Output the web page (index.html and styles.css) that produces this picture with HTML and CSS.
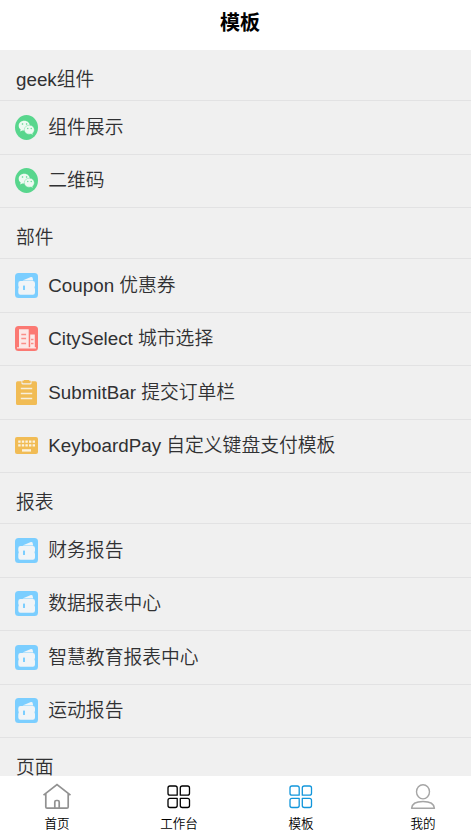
FILE: index.html
```
<!DOCTYPE html>
<html lang="zh-CN">
<head>
<meta charset="utf-8">
<meta name="viewport" content="width=device-width, initial-scale=1">
<title>模板</title>
<link rel="stylesheet" href="styles.css">
</head>
<body>
<svg class="defs" aria-hidden="true">
  <symbol id="chat" viewBox="0 0 23 25">
    <ellipse cx="11.5" cy="12.5" rx="11.5" ry="12.5" fill="#58d68d"/>
    <path d="M9.300 5.700c-3.300 0-5.600 2.200-5.600 5 0 1.600.7 2.900 2 3.800l-.6 2 2.200-1.100c4 .9 7.500-1.400 7.500-4.700 0-2.800-2.300-5-5.500-5z" fill="#eefaf2"/>
    <path d="M14.400 10.200c-3 0-5.100 2-5.100 4.500s2.100 4.500 5.100 4.500l1.700-.2 2 1-.5-1.900c1.100-.8 1.700-2 1.700-3.400 0-2.500-2-4.500-4.900-4.500z" fill="#eefaf2" stroke="#58d68d" stroke-width=".4"/>
    <g fill="#58d68d"><circle cx="7.500" cy="9" r=".8"/><circle cx="11.600" cy="9" r=".8"/><circle cx="12.800" cy="13.500" r=".65"/><circle cx="16.200" cy="13.500" r=".65"/></g>
  </symbol>
  <symbol id="wallet" viewBox="0 0 23 25">
    <rect width="23" height="25" rx="3.500" fill="#7bceff"/>
    <path d="M7.500 7.400 15.900 4q1.300-.4 1.700.8l.6 2.600z" fill="#f0f4f7"/>
    <path d="M5.500 8.100h12.300q2.200 0 2.200 2.200v2.500q-1 1.600 0 3.200v3.500q0 2.300-2.200 2.300H5.500q-2.200 0-2.200-2.300V16q1-1.600 0-3.200v-2.500q0-2.200 2.200-2.200z" fill="#f0f4f7"/>
    <rect x="8" y="12.500" width="2" height="4.500" rx=".5" fill="#7bceff"/>
  </symbol>
  <symbol id="city" viewBox="0 0 23 25">
    <rect width="23" height="25" rx="3.500" fill="#fb7973"/>
    <path d="M4 3.200h9.700V21.300H4zM15.200 8.500h4.600v12.800h-4.600zM2 21.200h19v1.200H2z" fill="#fbe8e7"/>
    <path d="M6.300 8.500h4.800M6.300 12.500h4.800M6.300 17.500h4.800M16 13.500h2.500M16 17.500h2.500" stroke="#fb8d87" stroke-width="1.300"/>
  </symbol>
  <symbol id="clipboard" viewBox="0 0 23 25">
    <path d="M2.600 1.300h17.800Q22 1.300 22 2.900v20.500q0 1.600-1.600 1.600H2.600Q1 25 1 23.400V2.900q0-1.600 1.600-1.600z" fill="#f1bc55"/>
    <path d="M6.500 0h10v3.200q0 1.200-1.500 1.200H8q-1.500 0-1.500-1.200z" fill="#f0f0f0"/>
    <path d="M8.800 0h5.400v.8h1.500v1.500q0 1-1 1H8.300q-1 0-1-1V.8h1.500z" fill="#f1bc55"/>
    <path d="M5.800 8.500h11.400M5.800 13.500h11.400M5.800 18.500h11.400" stroke="#f8efdc" stroke-width="1.300"/>
  </symbol>
  <symbol id="keyboard" viewBox="0 0 23 25">
    <rect y="4" width="23" height="17" rx="2" fill="#f1bc55"/>
    <path d="M3.200 8.700h16.800M3.200 12.400h16.800" stroke="#fbf2df" stroke-width="2.300" stroke-dasharray="2.400 1.200"/>
    <path d="M7 17.400h9" stroke="#fbf2df" stroke-width="2.400"/>
  </symbol>
  <symbol id="home" viewBox="0 0 30 30">
    <path d="M1.500 13.200 15 2.600l13.500 10.600M3.800 11.700v13.200q0 1.300 1.300 1.300h19.800q1.300 0 1.300-1.300V11.700M12.800 26v-6q0-1.500 1.500-1.500h1.400q1.500 0 1.500 1.500v6" fill="none" stroke="#919191" stroke-width="1.700"/>
  </symbol>
  <symbol id="grid" viewBox="0 0 30 30">
    <path d="M6 4h5.200q2 0 2 2v7.200H6q-2 0-2-2V6q0-2 2-2zM18.300 4h5.200q2 0 2 2v5.200q0 2-2 2h-7.200V6q0-2 2-2zM6 16.300h7.200v7.200q0 2-2 2H6q-2 0-2-2v-5.200q0-2 2-2zM16.300 16.300h7.200q2 0 2 2v5.200q0 2-2 2h-5.200q-2 0-2-2z" fill="none" stroke="currentColor" stroke-width="1.300" stroke-linejoin="round"/>
  </symbol>
  <symbol id="user" viewBox="0 0 30 30">
    <ellipse cx="15" cy="9.800" rx="6.500" ry="7.100" fill="none" stroke="#a5a5a5" stroke-width="1.400"/>
    <path d="M3.600 26.300C4 21.700 8.300 19.600 15 19.600s11 2.100 11.400 6.700z" fill="none" stroke="#a5a5a5" stroke-width="1.500" stroke-linejoin="round"/>
  </symbol>
</svg>
<header class="navbar">模板</header>
<main class="list">
  <h2 class="group">geek组件</h2>
  <div class="row"><svg class="icon"><use href="#chat"/></svg><span>组件展示</span></div>
  <div class="row"><svg class="icon"><use href="#chat"/></svg><span>二维码</span></div>
  <h2 class="group">部件</h2>
  <div class="row"><svg class="icon"><use href="#wallet"/></svg><span>Coupon 优惠券</span></div>
  <div class="row"><svg class="icon"><use href="#city"/></svg><span>CitySelect 城市选择</span></div>
  <div class="row"><svg class="icon"><use href="#clipboard"/></svg><span>SubmitBar 提交订单栏</span></div>
  <div class="row"><svg class="icon"><use href="#keyboard"/></svg><span>KeyboardPay 自定义键盘支付模板</span></div>
  <h2 class="group">报表</h2>
  <div class="row"><svg class="icon"><use href="#wallet"/></svg><span>财务报告</span></div>
  <div class="row"><svg class="icon"><use href="#wallet"/></svg><span>数据报表中心</span></div>
  <div class="row"><svg class="icon"><use href="#wallet"/></svg><span>智慧教育报表中心</span></div>
  <div class="row"><svg class="icon"><use href="#wallet"/></svg><span>运动报告</span></div>
  <h2 class="group">页面</h2>
</main>
<nav class="tabbar">
  <a class="tab"><svg class="tab-icon"><use href="#home"/></svg><span>首页</span></a>
  <a class="tab"><svg class="tab-icon"><use href="#grid"/></svg><span>工作台</span></a>
  <a class="tab"><svg class="tab-icon active"><use href="#grid"/></svg><span>模板</span></a>
  <a class="tab"><svg class="tab-icon"><use href="#user"/></svg><span>我的</span></a>
</nav>
</body>
</html>
```
FILE: styles.css
```
* {
  box-sizing: border-box;
}

body {
  margin: 0;
  height: 833px;
  display: flex;
  flex-direction: column;
  overflow: hidden;
  background: #fff;
  color: #303133;
  font-family: "Liberation Sans", "Noto Sans CJK SC", sans-serif;
}

.defs {
  display: none;
}

.navbar {
  flex: none;
  height: 50px;
  padding-left: 9px;
  line-height: 46px;
  text-align: center;
  font-size: 20px;
  font-weight: 700;
  color: #000;
}

.list {
  flex: 1;
  min-height: 0;
  overflow: hidden;
  background: #f0f0f0;
  font-size: 18.8px;
  font-weight: 350;
}

.group {
  height: 51px;
  margin: 0;
  padding: 8px 16px 0;
  border-bottom: 1px solid #e2e2e3;
  font-size: inherit;
  font-weight: inherit;
  line-height: 44px;
  white-space: nowrap;
}

.row {
  display: flex;
  align-items: center;
  gap: 10.300px;
  height: 53.500px;
  padding-left: 15px;
  border-bottom: 1px solid #e2e2e3;
  line-height: 28px;
  white-space: nowrap;
}

.row span {
  padding-top: 1px;
}

.icon {
  flex: none;
  width: 23px;
  height: 25px;
}

.tabbar {
  flex: none;
  display: flex;
  justify-content: space-between;
  height: 57px;
  padding: 6px 29px 0 38px;
  background: #fff;
}

.tab {
  display: flex;
  flex-direction: column;
  align-items: center;
  width: 38px;
  font-size: 12.560px;
  font-weight: 350;
  line-height: 18px;
  color: #000;
  white-space: nowrap;
}

.tab-icon {
  flex: none;
  width: 30px;
  height: 30px;
  margin-bottom: 3px;
}

.active {
  color: #1296db;
}
```
